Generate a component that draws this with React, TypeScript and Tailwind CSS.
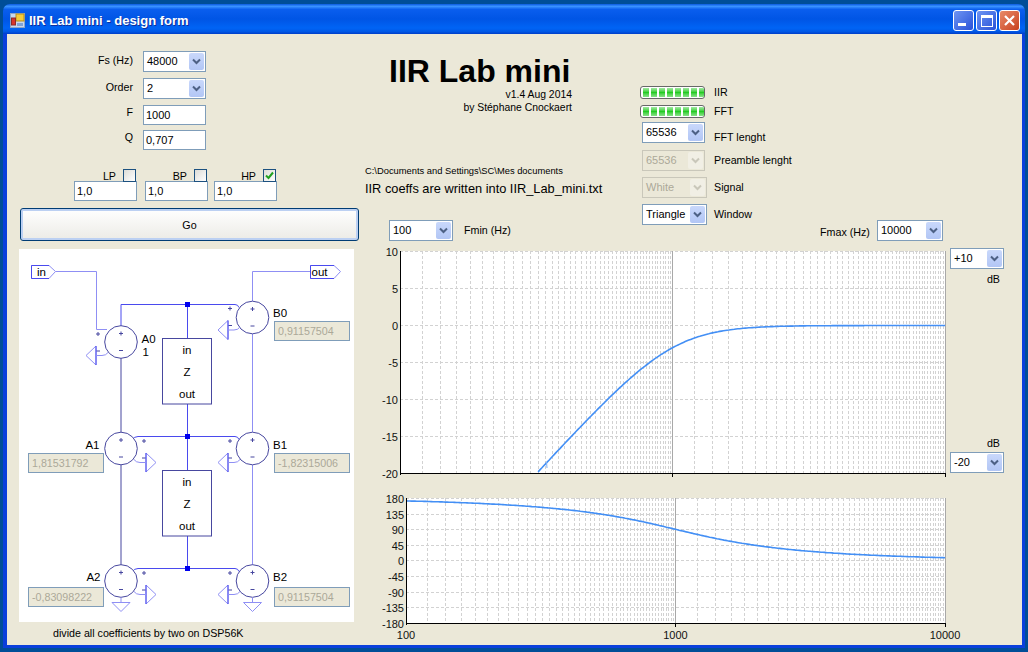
const uiFont = "font-['Liberation_Sans',Arial,sans-serif]";

function Chevron({ muted }: { muted?: boolean }) {
  return (
    <svg width="9" height="7" viewBox="0 0 9 7">
      <path
        d="M1 1.5 L4.5 5 L8 1.5"
        fill="none"
        stroke={muted ? "#c9c7ba" : "#4d6185"}
        strokeWidth="2"
      />
    </svg>
  );
}

function Combo({ value, width, disabled }: { value: string; width: string; disabled?: boolean }) {
  return (
    <div
      className={`flex h-[21px] shrink-0 items-center justify-between border p-px ${width} ${
        disabled ? "border-[#c9c7ba] bg-[#ebe8d8] text-[#aca899]" : "border-[#7f9db9] bg-white text-black"
      }`}
    >
      <span className="pl-[2px] text-[11px] leading-none">{value}</span>
      <div
        className={`flex h-[17px] w-[15px] items-center justify-center rounded-[2px] ${
          disabled ? "bg-[#f1efe5]" : "bg-gradient-to-b from-[#c9d8fb] to-[#b2c6f5]"
        }`}
      >
        <Chevron muted={disabled} />
      </div>
    </div>
  );
}

function TextBox({ value, height = "h-[20px]" }: { value: string; height?: string }) {
  return (
    <div className={`flex w-[63px] items-center border border-[#7f9db9] bg-white pl-[2px] text-[11px] ${height}`}>
      {value}
    </div>
  );
}

function CheckBox({ checked }: { checked?: boolean }) {
  return (
    <div className="relative z-10 mr-px flex h-[13px] w-[13px] items-center justify-center border border-[#1c5180] bg-gradient-to-br from-[#dcdcd7] to-white">
      {checked && (
        <svg width="9" height="9" viewBox="0 0 9 9">
          <path d="M1 4.5 L3.5 7 L8 1.5" fill="none" stroke="#21a121" strokeWidth="2" />
        </svg>
      )}
    </div>
  );
}

function FilterGroup({ label, checked, labelMargin }: { label: string; checked?: boolean; labelMargin: string }) {
  return (
    <div className="flex w-[63px] flex-col">
      <div className="-mb-px flex h-[13px] items-center justify-end">
        <span className={`mt-[2px] text-[10.7px] ${labelMargin}`}>{label}</span>
        <CheckBox checked={checked} />
      </div>
      <TextBox value="1,0" />
    </div>
  );
}

function Progress() {
  return (
    <div className="flex h-[13px] w-[65px] items-center gap-[2px] overflow-hidden rounded-[3px] border border-[#686868] bg-white px-[2px]">
      {[0, 1, 2, 3, 4, 5, 6, 7].map((i) => (
        <div key={i} className="h-[9px] w-[6px] shrink-0 bg-gradient-to-b from-[#9fe99f] via-[#22cc22] to-[#86e286]" />
      ))}
    </div>
  );
}

function FieldRow({ label, children, pad = "pt-0" }: { label: string; children: React.ReactNode; pad?: string }) {
  return (
    <div className="flex items-start gap-[10px]">
      <div className={`w-[126px] text-right text-[10.7px] leading-[13px] ${pad}`}>{label}</div>
      {children}
    </div>
  );
}

const WIRE = "#4a4aee";
const PALE = "#8f8ff4";
const OUTLINE = "#47479f";

function Sum({ cx, cy }: { cx: number; cy: number }) {
  return (
    <g>
      <circle cx={cx} cy={cy} r="16.3" fill="white" stroke={OUTLINE} />
      <path
        d={`M${cx - 2} ${cy - 8.5} h4 M${cx} ${cy - 10.5} v4 M${cx - 2} ${cy + 8.5} h4`}
        stroke={OUTLINE}
      />
    </g>
  );
}

// little + / - pins with a reference arrow, dir -1 points left, 1 points right
function Pins({ x, y, dir }: { x: number; y: number; dir: number }) {
  const base = x + dir * 2;
  return (
    <g fill="none">
      <path d={`M${x - 2} ${y - 17} h4 M${x} ${y - 19} v4 M${x - 2} ${y} h4`} stroke={OUTLINE} />
      <path
        d={`M${base} ${y - 5} V${y + 14} L${base + dir * 10} ${y + 4.5} Z`}
        stroke={PALE}
        fill="white"
      />
      <path d={`M${base} ${y - 5} V${y + 14}`} stroke={WIRE} />
      <path d={`M${base} ${y + 4.5} H${base - dir * 6} q${-dir * 4} 0 ${-dir * 6} -3`} stroke={PALE} />
    </g>
  );
}

function Ground({ cx, y }: { cx: number; y: number }) {
  return <path d={`M${cx} ${y - 5} v5 M${cx - 9} ${y} h18 l-9 9 Z`} fill="white" stroke={PALE} />;
}

function ZBox({ y }: { y: number }) {
  return (
    <g>
      <rect x="162.5" y={y} width="49" height="65.5" fill="white" stroke={OUTLINE} />
      <text x="187" y={y + 15} textAnchor="middle">in</text>
      <text x="187" y={y + 37} textAnchor="middle">Z</text>
      <text x="187" y={y + 59} textAnchor="middle">out</text>
    </g>
  );
}

function Schematic() {
  return (
    <svg
      width="335"
      height="373"
      viewBox="19 249 335 373"
      className="block"
      fontFamily="'Liberation Sans', Arial, sans-serif"
      fontSize="11.5"
      fill="black"
    >
      <rect x="19" y="249" width="335" height="373" fill="white" />
      {/* wires */}
      <path d="M55.5 271.5 H96.5 V329.5 H107" fill="none" stroke={PALE} />
      <path d="M121 326 V304.5 H235 q3 0 4 3" fill="none" stroke={WIRE} />
      <path d="M187.5 304.5 V338.5 M187.5 404 V436.5 M187.5 436.5 V470.5 M187.5 536 V568.5" stroke={WIRE} />
      <path d="M132 440 q2 -3.5 6 -3.5 H235 q3 0 4 3 M132 572 q2 -3.5 6 -3.5 H235 q3 0 4 3" fill="none" stroke={WIRE} />
      <path d="M121 358 V432 M121 465 V565" stroke={OUTLINE} />
      <path d="M252.5 334 V432 M252.5 465 V565 M252.5 301 V271.5 H310" fill="none" stroke={PALE} />
      <rect x="185" y="302" width="5" height="5" fill="#0000ee" />
      <rect x="185" y="434" width="5" height="5" fill="#0000ee" />
      <rect x="185" y="566" width="5" height="5" fill="#0000ee" />

      <ZBox y={338.5} />
      <ZBox y={470.5} />

      <Sum cx={121} cy={342} />
      <Sum cx={252.5} cy={317.5} />
      <Sum cx={121} cy={448.5} />
      <Sum cx={252.5} cy={448.5} />
      <Sum cx={121} cy={581} />
      <Sum cx={252.5} cy={581} />

      <Pins x={98} y={351} dir={-1} />
      <Pins x={230} y={325.5} dir={-1} />
      <Pins x={144} y={458} dir={1} />
      <Pins x={230} y={458} dir={-1} />
      <Pins x={144} y={590} dir={1} />
      <Pins x={230} y={590} dir={-1} />
      <Ground cx={121} y={602.5} />
      <Ground cx={252.5} y={602.5} />

      {/* in / out tags */}
      <path d="M31.5 265.5 H49 L55.5 271.5 L49 278.5 H31.5" fill="white" stroke={PALE} />
      <path d="M49 265.5 H31.5 V278.5 H49" fill="none" stroke={WIRE} />
      <text x="37" y="276">in</text>
      <path d="M310.5 265.5 H334 L340.5 271.5 L334 278.5 H310.5" fill="white" stroke={PALE} />
      <path d="M334 265.5 H310.5 V278.5 H334" fill="none" stroke={WIRE} />
      <text x="311.5" y="276">out</text>

      <text x="141.5" y="342.5">A0</text>
      <text x="142.5" y="355.5">1</text>
      <text x="273" y="317">B0</text>
      <text x="99.5" y="449" textAnchor="end">A1</text>
      <text x="273" y="449">B1</text>
      <text x="100.5" y="581" textAnchor="end">A2</text>
      <text x="273" y="581">B2</text>
    </svg>
  );
}

function Coef({ value, place }: { value: string; place: string }) {
  return (
    <div
      className={`absolute flex h-[20px] w-[76px] items-center border border-[#7f9db9] bg-[#ebe8d8] pl-[3px] text-[10.7px] text-[#aca899] ${place}`}
    >
      {value}
    </div>
  );
}

const subTicks: number[] = [];
for (let f = 120; f < 1000; f += 20) subTicks.push(f);
for (let f = 1200; f < 10000; f += 200) subTicks.push(f);

function Plot({
  left,
  top,
  bottom,
  rows,
  curve,
  xLabels,
  viewY,
  viewH,
  children,
}: {
  left: number;
  top: number;
  bottom: number;
  rows: { label: string; y: number }[];
  curve: (f: number) => number | null;
  xLabels?: boolean;
  viewY: number;
  viewH: number;
  children?: React.ReactNode;
}) {
  const right = 945;
  const xOf = (f: number) => left + ((Math.log10(f) - 2) / 2) * (right - left);
  const pts: string[] = [];
  for (let i = 0; i <= 300; i++) {
    const f = 100 * Math.pow(100, i / 300);
    const y = curve(f);
    if (y !== null) pts.push(`${xOf(f).toFixed(1)},${y.toFixed(1)}`);
  }
  return (
    <svg
      width="585"
      height={viewH}
      viewBox={`365 ${viewY} 585 ${viewH}`}
      className="block overflow-visible"
      fontFamily="'Liberation Sans', Arial, sans-serif"
      fontSize="11"
      fill="#111"
    >
      <rect x={left} y={top} width={right - left} height={bottom - top} fill="white" />
      <g stroke="#d2d2d2" strokeDasharray="3 2" shapeRendering="crispEdges">
        {subTicks.map((f) => {
          const x = Math.round(xOf(f)) + 0.5;
          return <line key={f} x1={x} x2={x} y1={top} y2={bottom} />;
        })}
        {rows.map((r) => (
          <line key={r.label} x1={left} x2={right} y1={r.y} y2={r.y} />
        ))}
      </g>
      <g stroke="#a8a8a8" shapeRendering="crispEdges">
        <line x1={xOf(1000)} x2={xOf(1000)} y1={top} y2={bottom} />
        <line x1={right} x2={right} y1={top} y2={bottom} />
      </g>
      <polyline points={pts.join(" ")} fill="none" stroke="#438ff5" strokeWidth="1.6" />
      {children}
      <g stroke="black" shapeRendering="crispEdges">
        <line x1={left} x2={left} y1={top} y2={bottom + 1} />
        <line x1={left} x2={right + 1} y1={bottom} y2={bottom} />
        <line x1={xOf(1000)} x2={xOf(1000)} y1={bottom} y2={bottom + 3} />
        <line x1={right} x2={right} y1={bottom} y2={bottom + 3} />
      </g>
      {rows.map((r) => (
        <text key={r.label} x={left - 2} y={r.y + 4} textAnchor="end">
          {r.label}
        </text>
      ))}
      {xLabels && (
        <g textAnchor="middle">
          <text x={left} y={bottom + 15}>100</text>
          <text x={xOf(1000)} y={bottom + 15}>1000</text>
          <text x={right} y={bottom + 15}>10000</text>
        </g>
      )}
    </svg>
  );
}

const gainRows = [
  { label: "10", y: 251.5 },
  { label: "5", y: 288.5 },
  { label: "0", y: 325.5 },
  { label: "-5", y: 362.5 },
  { label: "-10", y: 399.5 },
  { label: "-15", y: 436.5 },
  { label: "-20", y: 473.5 },
];

const phaseRows = ["180", "135", "90", "45", "0", "-45", "-90", "-135", "-180"].map((label, i) => ({
  label,
  y: Math.round(498 + i * 15.6) + 0.5,
}));

function gainCurve(f: number) {
  const n = f / 1000;
  const db = 10 * Math.log10(Math.pow(n, 4) / (1 + Math.pow(n, 4)));
  return db < -20 ? null : 325.5 - db * 7.4;
}

function phaseCurve(f: number) {
  const n = f / 1000;
  const deg = 180 - (Math.atan2(n / 0.707, 1 - n * n) * 180) / Math.PI;
  return 560.5 - (deg / 180) * 62.4;
}

function TitleBar() {
  return (
    <div className="flex h-[30px] shrink-0 items-center rounded-t-[7px] bg-[linear-gradient(180deg,#0a5ae0_0%,#3a93ff_8%,#0a5eee_18%,#0055e5_50%,#0064f5_80%,#0058e6_92%,#003dc8_100%)] pl-[7px] pr-[5px] pt-[3px]">
      <svg width="15" height="15" viewBox="0 0 15 15" className="shrink-0">
        <rect x="0.5" y="0.5" width="14" height="14" fill="#c8d8ee" stroke="#8fa6c6" />
        <rect x="6" y="1" width="8" height="7" fill="#f6cc3a" stroke="#b98f1c" />
        <rect x="1.5" y="5" width="4" height="7" fill="#d8352b" stroke="#8c2a2a" />
        <rect x="7" y="10" width="6" height="3" fill="#7fa3d8" />
      </svg>
      <span className="ml-[4px] mt-px text-[13px] font-bold text-white [text-shadow:1px_1px_0_#0f2f9c]">
        IIR Lab mini - design form
      </span>
      <div className="ml-auto flex gap-[2px]">
        <div className="flex h-[21px] w-[21px] items-end rounded-[3px] border border-white bg-gradient-to-br from-[#6f94f2] to-[#2a50d8] pb-[4px] pl-[4px]">
          <div className="h-[3px] w-[8px] bg-white" />
        </div>
        <div className="flex h-[21px] w-[21px] items-center justify-center rounded-[3px] border border-white bg-gradient-to-br from-[#6f94f2] to-[#2a50d8]">
          <div className="h-[12px] w-[12px] border border-t-[3px] border-white" />
        </div>
        <div className="flex h-[21px] w-[21px] items-center justify-center rounded-[3px] border border-white bg-gradient-to-br from-[#e88a68] to-[#c83f1a]">
          <svg width="13" height="13" viewBox="0 0 13 13">
            <path d="M2 2 L11 11 M11 2 L2 11" stroke="white" strokeWidth="2.2" />
          </svg>
        </div>
      </div>
    </div>
  );
}

function LeftPanel() {
  return (
    <div className="w-[358px] shrink-0 pt-[17px]">
      <div className="flex flex-col">
        <FieldRow label="Fs (Hz)" pad="pt-[3px]">
          <Combo value="48000" width="w-[63px]" />
        </FieldRow>
        <div className="mt-[6px]">
          <FieldRow label="Order" pad="pt-[3px]">
            <Combo value="2" width="w-[63px]" />
          </FieldRow>
        </div>
        <div className="mt-[6px]">
          <FieldRow label="F" pad="pt-px">
            <TextBox value="1000" />
          </FieldRow>
        </div>
        <div className="mt-[5px]">
          <FieldRow label="Q" pad="pt-px">
            <TextBox value="0,707" />
          </FieldRow>
        </div>
      </div>

      <div className="ml-[67px] mt-[19px] flex">
        <FilterGroup label="LP" labelMargin="mr-[7px]" />
        <div className="ml-[8px]">
          <FilterGroup label="BP" labelMargin="mr-[7px]" />
        </div>
        <div className="ml-[6px]">
          <FilterGroup label="HP" checked labelMargin="mr-[7px]" />
        </div>
      </div>

      <div className="ml-[13px] mt-[7px] flex h-[33px] w-[339px] items-center justify-center rounded-[3px] border border-[#003c74] bg-gradient-to-b from-white to-[#ecebe6] pt-px text-[10.7px] shadow-[inset_0_0_0_2px_#bcd0f2]">
        Go
      </div>

      <div className="relative ml-[12px] mt-[8px] w-[335px]">
        <Schematic />
        <Coef value="0,91157504" place="left-[255px] top-[72px]" />
        <Coef value="1,81531792" place="left-[9px] top-[204px]" />
        <Coef value="-1,82315006" place="left-[255px] top-[204px]" />
        <Coef value="-0,83098222" place="left-[9px] top-[338px]" />
        <Coef value="0,91157504" place="left-[255px] top-[338px]" />
      </div>

      <div className="ml-[46px] mt-[5px] text-[10.7px] leading-[13px]">divide all coefficients by two on DSP56K</div>
    </div>
  );
}

function Heading() {
  return (
    <div className="flex flex-col pt-[17px]">
      <div className="ml-[24px] h-[37px] whitespace-nowrap text-[32px] font-bold leading-[40px] text-black">
        IIR Lab mini
      </div>
      <div className="w-[207px] text-right text-[10.4px] leading-[13px]">v1.4 Aug 2014</div>
      <div className="w-[207px] text-right text-[10.4px] leading-[13px]">by Stéphane Cnockaert</div>
      <div className="mt-[51px] whitespace-nowrap text-[9.35px] leading-[13px]">
        {"C:\\Documents and Settings\\SC\\Mes documents"}
      </div>
      <div className="mt-[3px] whitespace-nowrap text-[12.8px] leading-[16px]">IIR coeffs are written into IIR_Lab_mini.txt</div>
      <div className="ml-[24px] mt-[23px] flex items-center gap-[11px]">
        <Combo value="100" width="w-[64px]" />
        <span className="text-[10.7px]">Fmin (Hz)</span>
      </div>
    </div>
  );
}

function Controls() {
  return (
    <div className="flex flex-col pt-[52px] text-[10.7px] leading-[13px]">
      <div className="flex items-center">
        <Progress />
        <span className="ml-[9px]">IIR</span>
      </div>
      <div className="mt-[6px] flex items-center">
        <Progress />
        <span className="ml-[9px]">FFT</span>
      </div>
      <div className="ml-[2px] mt-[4px] flex">
        <Combo value="65536" width="w-[63px]" />
        <span className="ml-[9px] mt-[9px]">FFT lenght</span>
      </div>
      <div className="ml-[2px] mt-[6px] flex items-center">
        <Combo value="65536" width="w-[63px]" disabled />
        <span className="ml-[9px]">Preamble lenght</span>
      </div>
      <div className="ml-[2px] mt-[6px] flex items-center">
        <Combo value="White" width="w-[65px]" disabled />
        <span className="ml-[7px]">Signal</span>
      </div>
      <div className="ml-[2px] mt-[6px] flex items-center">
        <Combo value="Triangle" width="w-[65px]" />
        <span className="ml-[7px]">Window</span>
      </div>
    </div>
  );
}

function Charts() {
  return (
    <div className="flex">
      <div className="w-[585px] shrink-0">
        <Plot left={400} top={251} bottom={473.5} rows={gainRows} curve={gainCurve} viewY={248} viewH={242}>
          <path d="M546.5 462 l0.5 6" stroke="#7fb0f5" fill="none" />
        </Plot>
        <Plot left={406} top={498} bottom={623.5} rows={phaseRows} curve={phaseCurve} xLabels viewY={490} viewH={155} />
      </div>
      <div className="flex w-[54px] flex-col text-[10.7px] leading-[13px]">
        <Combo value="+10" width="w-[54px]" />
        <div className="mt-[4px] pr-[4px] text-right">dB</div>
        <div className="mt-[151px] pr-[4px] text-right">dB</div>
        <div className="mt-[2px]">
          <Combo value="-20" width="w-[54px]" />
        </div>
      </div>
    </div>
  );
}

export default function App() {
  return (
    <div className={`h-[652px] w-[1028px] overflow-hidden bg-[#004e98] px-[3px] pb-[4px] pt-[4px] text-black ${uiFont}`}>
      <div className="flex h-full flex-col">
        <TitleBar />
        <div className="flex flex-1 border-b-[3px] border-l-[4px] border-r-[3px] border-[#0a3fdc] bg-[#ebe8d8]">
          <LeftPanel />
          <div className="flex flex-1 flex-col">
            <div className="grid h-[214px] grid-cols-[275px_180px_1fr]">
              <Heading />
              <Controls />
              <div className="flex items-start gap-0 pt-[186px]">
                <span className="mt-[4px] w-[57px] text-[10.7px]">Fmax (Hz)</span>
                <Combo value="10000" width="w-[66px]" />
              </div>
            </div>
            <Charts />
          </div>
        </div>
      </div>
    </div>
  );
}
